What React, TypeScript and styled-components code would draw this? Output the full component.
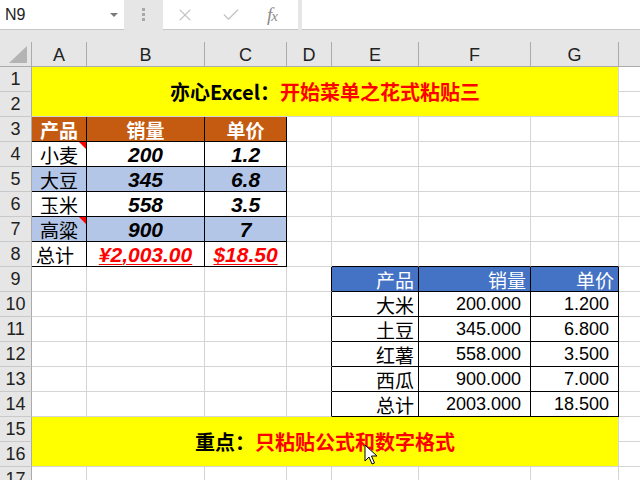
import React from 'react';
import styled, { createGlobalStyle } from 'styled-components';
import { X, Check } from 'lucide-react';

const GRID = '#d4d4d4';
const HEAD_LINE = '#ababab';
const HEAD_BG = '#e6e6e6';
const CJK = '"Noto Sans CJK SC", "Liberation Sans", sans-serif';

const GlobalStyle = createGlobalStyle`
  html, body {
    margin: 0;
    padding: 0;
    background: #fff;
  }
  body {
    font-family: "Liberation Sans", "Noto Sans CJK SC", sans-serif;
    overflow: hidden;
  }
`;

const Page = styled.div`
  position: relative;
  width: 640px;
  height: 480px;
  overflow: hidden;
  background: #fff;
`;

const Toolbar = styled.div`
  display: flex;
  align-items: flex-start;
  height: 42px;
  background: ${HEAD_BG};
`;

const NameBox = styled.div`
  box-sizing: border-box;
  width: 124px;
  height: 30px;
  display: flex;
  align-items: center;
  justify-content: space-between;
  padding: 0 6px 0 5px;
  background: #fff;
  border-bottom: 1px solid #c6c6c6;
  font-size: 16px;
  color: #222;
`;

const Caret = styled.span`
  width: 0;
  height: 0;
  border-left: 4px solid transparent;
  border-right: 4px solid transparent;
  border-top: 4px solid #7a7a7a;
`;

const Grip = styled.div`
  width: 39px;
  height: 29px;
  display: flex;
  flex-direction: column;
  align-items: center;
  justify-content: center;
  gap: 2px;
  > i {
    width: 3px;
    height: 3px;
    background: #a8a8a8;
  }
`;

const ButtonBox = styled.div`
  box-sizing: border-box;
  width: 135px;
  height: 30px;
  display: flex;
  align-items: center;
  padding-left: 12px;
  gap: 26px;
  background: #fff;
  border-bottom: 1px solid #c6c6c6;
  color: #c4c4c4;
`;

const Fx = styled.span`
  font-family: "Liberation Serif", serif;
  font-style: italic;
  font-size: 19px;
  color: #8c8c8c;
  letter-spacing: -1px;
  > small {
    font-size: 15px;
  }
`;

const FormulaInput = styled.div`
  box-sizing: border-box;
  flex: 1;
  height: 30px;
  margin-left: 4px;
  background: #fff;
  border-bottom: 1px solid #c6c6c6;
`;

const Sheet = styled.div`
  display: grid;
  grid-template-columns: 32px 55px 118px 82px 45px 87px 112px 88px 80px;
  grid-auto-rows: 25px;
`;

const Corner = styled.div`
  position: relative;
  box-sizing: border-box;
  background: ${HEAD_BG};
  border-right: 1px solid ${HEAD_LINE};
  border-bottom: 1px solid ${HEAD_LINE};
  &::after {
    content: '';
    position: absolute;
    right: 4px;
    bottom: 3px;
    width: 0;
    height: 0;
    border-left: 18px solid transparent;
    border-bottom: 17px solid #b4b4b4;
  }
`;

const ColHead = styled.div`
  box-sizing: border-box;
  display: flex;
  align-items: center;
  justify-content: center;
  padding-top: 2px;
  background: ${HEAD_BG};
  border-right: 1px solid ${HEAD_LINE};
  border-bottom: 1px solid ${HEAD_LINE};
  font-size: 18px;
  color: #222;
`;

const RowHead = styled.div`
  box-sizing: border-box;
  display: flex;
  align-items: center;
  justify-content: center;
  background: ${HEAD_BG};
  border-right: 1px solid ${HEAD_LINE};
  border-bottom: 1px solid #c9c9c9;
  font-size: 18px;
  color: #222;
`;

const Cell = styled.div<{ $bg?: string; $right?: string; $bottom?: string; $align?: string }>`
  position: relative;
  box-sizing: border-box;
  display: flex;
  align-items: center;
  justify-content: ${p => p.$align ?? 'flex-start'};
  padding: 0 4px;
  background: ${p => p.$bg ?? '#fff'};
  border-right: 1px solid ${p => p.$right ?? GRID};
  border-bottom: 1px solid ${p => p.$bottom ?? GRID};
  white-space: nowrap;
  overflow: hidden;
  line-height: 1;
`;

const Banner = styled.div`
  box-sizing: border-box;
  grid-column: span 7;
  grid-row: span 2;
  display: flex;
  align-items: center;
  justify-content: center;
  background: #ffff00;
  border-right: 1px solid ${GRID};
  border-bottom: 1px solid ${GRID};
  font-family: ${CJK};
  font-weight: 700;
  font-size: 20px;
  color: #000;
  > em {
    font-style: normal;
    color: #ff0000;
  }
`;

const NoteMark = styled.span`
  position: absolute;
  top: 0;
  right: 0;
  width: 0;
  height: 0;
  border-top: 7px solid #ff0000;
  border-left: 7px solid transparent;
`;

const Label = styled.span<{ $bold?: boolean; $light?: boolean }>`
  font-family: ${CJK};
  font-size: 19px;
  font-weight: ${p => (p.$bold ? 700 : 400)};
  color: ${p => (p.$light ? '#fff' : '#000')};
`;

const Figure = styled.span<{ $total?: boolean }>`
  font-family: "Liberation Sans", sans-serif;
  font-size: 21px;
  font-weight: 700;
  font-style: italic;
  color: ${p => (p.$total ? '#ff0000' : '#000')};
  text-decoration: ${p => (p.$total ? 'underline' : 'none')};
  text-decoration-thickness: 1px;
  text-underline-offset: 2px;
`;

const Plain = styled.span`
  font-family: "Liberation Sans", sans-serif;
  font-size: 18px;
  color: #000;
  padding-right: 5px;
`;

const Cursor = styled.svg`
  position: absolute;
  left: 364px;
  top: 444px;
`;

const crops = [
  { name: '小麦', qty: '200', price: '1.2', note: true, band: false },
  { name: '大豆', qty: '345', price: '6.8', note: false, band: true },
  { name: '玉米', qty: '558', price: '3.5', note: false, band: false },
  { name: '高粱', qty: '900', price: '7', note: true, band: true },
];

const copies = [
  ['大米', '200.000', '1.200'],
  ['土豆', '345.000', '6.800'],
  ['红薯', '558.000', '3.500'],
  ['西瓜', '900.000', '7.000'],
  ['总计', '2003.000', '18.500'],
];

const COLS = ['A', 'B', 'C', 'D', 'E', 'F', 'G', ''];
const BAND = '#b4c6e7';

const App = () => {
  const rows: React.ReactNode[] = [];

  rows.push(
    <RowHead key="h1">1</RowHead>,
    <Banner key="title">
      亦心Excel：<em>开始菜单之花式粘贴三</em>
    </Banner>,
    <Cell key="1h" />,
    <RowHead key="h2">2</RowHead>,
    <Cell key="2h" />,
  );

  // row 3: header of the first table
  rows.push(
    <RowHead key="h3">3</RowHead>,
    ...['产品', '销量', '单价'].map(t => (
      <Cell key={'3' + t} $bg="#c55a11" $right="#000" $bottom="#000" $align="center">
        <Label $bold $light>{t}</Label>
      </Cell>
    )),
    ...['d', 'e', 'f', 'g', 'h'].map(c => <Cell key={'3' + c} />),
  );

  crops.forEach((c, i) => {
    const r = i + 4;
    const bg = c.band ? BAND : '#fff';
    rows.push(
      <RowHead key={'h' + r}>{r}</RowHead>,
      <Cell key={r + 'a'} $bg={bg} $right="#000" $bottom="#000" $align="center">
        <Label>{c.name}</Label>
        {c.note && <NoteMark />}
      </Cell>,
      <Cell key={r + 'b'} $bg={bg} $right="#000" $bottom="#000" $align="center">
        <Figure>{c.qty}</Figure>
      </Cell>,
      <Cell key={r + 'c'} $bg={bg} $right="#000" $bottom="#000" $align="center">
        <Figure>{c.price}</Figure>
      </Cell>,
      ...['d', 'e', 'f', 'g', 'h'].map(k => <Cell key={r + k} />),
    );
  });

  rows.push(
    <RowHead key="h8">8</RowHead>,
    <Cell key="8a" $right="#000" $bottom="#000">
      <Label>总计</Label>
    </Cell>,
    <Cell key="8b" $right="#000" $bottom="#000" $align="center">
      <Figure $total>¥2,003.00</Figure>
    </Cell>,
    <Cell key="8c" $right="#000" $bottom="#000" $align="center">
      <Figure $total>$18.50</Figure>
    </Cell>,
    <Cell key="8d" />,
    <Cell key="8e" $bottom="#000" />,
    <Cell key="8f" $bottom="#000" />,
    <Cell key="8g" $bottom="#000" />,
    <Cell key="8h" />,
  );

  rows.push(
    <RowHead key="h9">9</RowHead>,
    ...['a', 'b', 'c'].map(k => <Cell key={'9' + k} />),
    <Cell key="9d" $right="#000" />,
    ...['产品', '销量', '单价'].map(t => (
      <Cell key={'9' + t} $bg="#4472c4" $right="#000" $bottom="#000" $align="flex-end">
        <Label $light>{t}</Label>
      </Cell>
    )),
    <Cell key="9h" />,
  );

  copies.forEach(([name, qty, price], i) => {
    const r = i + 10;
    rows.push(
      <RowHead key={'h' + r}>{r}</RowHead>,
      ...['a', 'b', 'c'].map(k => <Cell key={r + k} />),
      <Cell key={r + 'd'} $right="#000" />,
      <Cell key={r + 'e'} $right="#000" $bottom="#000" $align="flex-end">
        <Label>{name}</Label>
      </Cell>,
      <Cell key={r + 'f'} $right="#000" $bottom="#000" $align="flex-end">
        <Plain>{qty}</Plain>
      </Cell>,
      <Cell key={r + 'g'} $right="#000" $bottom="#000" $align="flex-end">
        <Plain>{price}</Plain>
      </Cell>,
      <Cell key={r + 'h'} />,
    );
  });

  rows.push(
    <RowHead key="h15">15</RowHead>,
    <Banner key="focus">
      重点：<em>只粘贴公式和数字格式</em>
    </Banner>,
    <Cell key="15h" />,
    <RowHead key="h16">16</RowHead>,
    <Cell key="16h" />,
    <RowHead key="h17">17</RowHead>,
    ...['a', 'b', 'c', 'd', 'e', 'f', 'g', 'h'].map(k => <Cell key={'17' + k} />),
  );

  return (
    <Page>
      <GlobalStyle />
      <Toolbar>
        <NameBox>
          N9
          <Caret />
        </NameBox>
        <Grip>
          <i />
          <i />
          <i />
        </Grip>
        <ButtonBox>
          <X size={20} strokeWidth={1.3} />
          <Check size={20} strokeWidth={1.6} />
          <Fx>
            f<small>x</small>
          </Fx>
        </ButtonBox>
        <FormulaInput />
      </Toolbar>
      <Sheet>
        <Corner />
        {COLS.map((c, i) => (
          <ColHead key={'col' + i}>{c}</ColHead>
        ))}
        {rows}
      </Sheet>
      <Cursor width="14" height="22" viewBox="0 0 14 22">
        <path
          d="M1 1 L1 17 L5 13 L8 20 L10.5 19 L7.5 12 L13 12 Z"
          fill="#fff"
          stroke="#000"
          strokeWidth="1"
          strokeLinejoin="round"
        />
      </Cursor>
    </Page>
  );
};

export default App;
